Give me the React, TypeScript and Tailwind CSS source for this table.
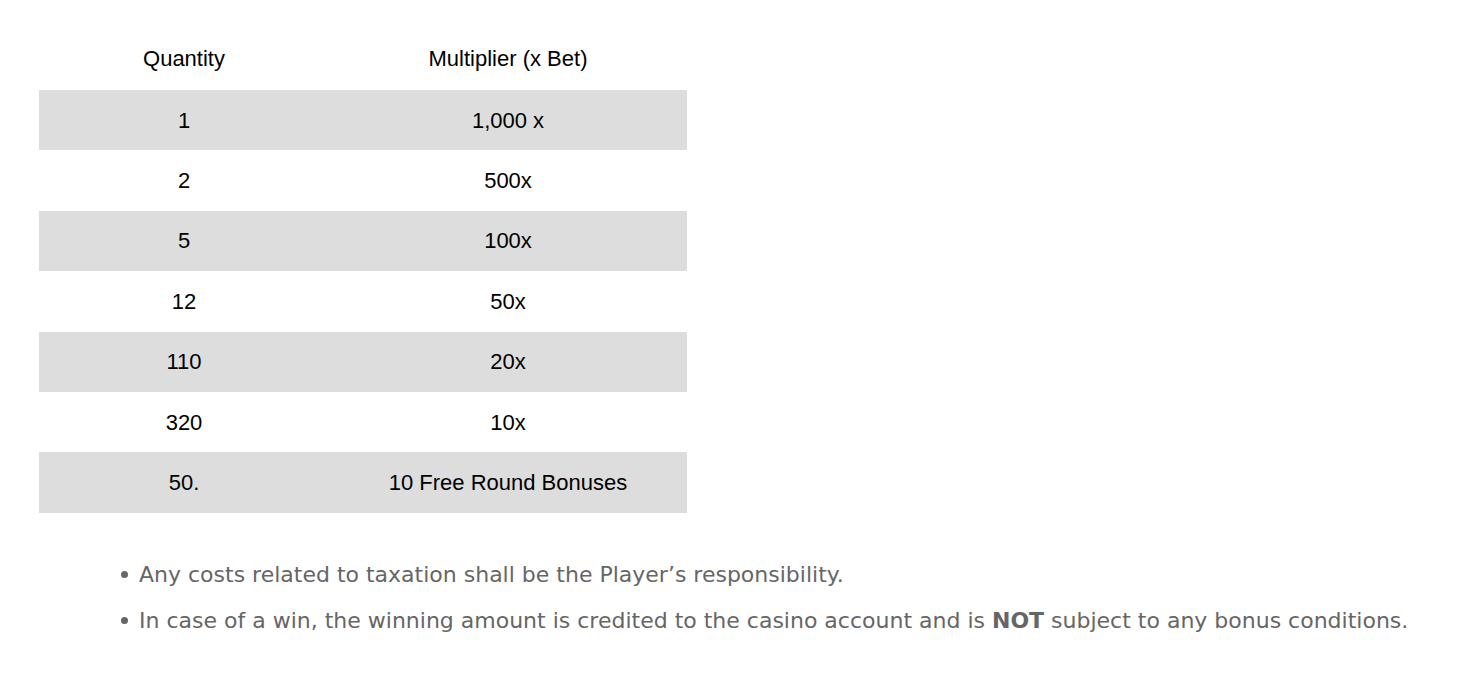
const rows = [
  { qty: "1", mult: "1,000 x" },
  { qty: "2", mult: "500x" },
  { qty: "5", mult: "100x" },
  { qty: "12", mult: "50x" },
  { qty: "110", mult: "20x" },
  { qty: "320", mult: "10x" },
  { qty: "50.", mult: "10 Free Round Bonuses" },
];

export default function App() {
  return (
    <div className="min-h-screen bg-white pt-[29px]">
      {/* prize table */}
      <table
        className="ml-[39px] w-[648px] border-collapse text-[22px] text-black"
        style={{ fontFamily: '"Liberation Sans", Arial, sans-serif' }}
      >
        <thead>
          <tr className="h-[61px]">
            <th className="w-[290px] pb-[2px] text-center font-normal">Quantity</th>
            <th className="pb-[2px] text-center font-normal">Multiplier (x Bet)</th>
          </tr>
        </thead>
        <tbody>
          {rows.map((row, i) => (
            <tr
              key={i}
              className={i % 2 === 0 ? "h-[60.4px] bg-[#dddddd]" : "h-[60.4px] bg-white"}
            >
              <td className="text-center">{row.qty}</td>
              <td className="text-center">{row.mult}</td>
            </tr>
          ))}
        </tbody>
      </table>

      {/* notes */}
      <ul
        className="mt-[50px] ml-[121px] flex flex-col gap-[22px] text-[22px] leading-[24px] text-[#666666]"
        style={{ fontFamily: '"DejaVu Sans", Verdana, sans-serif' }}
      >
        <li className="flex items-center gap-[11px]">
          <span className="h-[7px] w-[7px] rounded-full bg-[#666666]" />
          <span>Any costs related to taxation shall be the Player’s responsibility.</span>
        </li>
        <li className="flex items-center gap-[11px]">
          <span className="h-[7px] w-[7px] rounded-full bg-[#666666]" />
          <span>
            In case of a win, the winning amount is credited to the casino account and is{" "}
            <b className="font-bold">NOT</b> subject to any bonus conditions.
          </span>
        </li>
      </ul>
    </div>
  );
}
